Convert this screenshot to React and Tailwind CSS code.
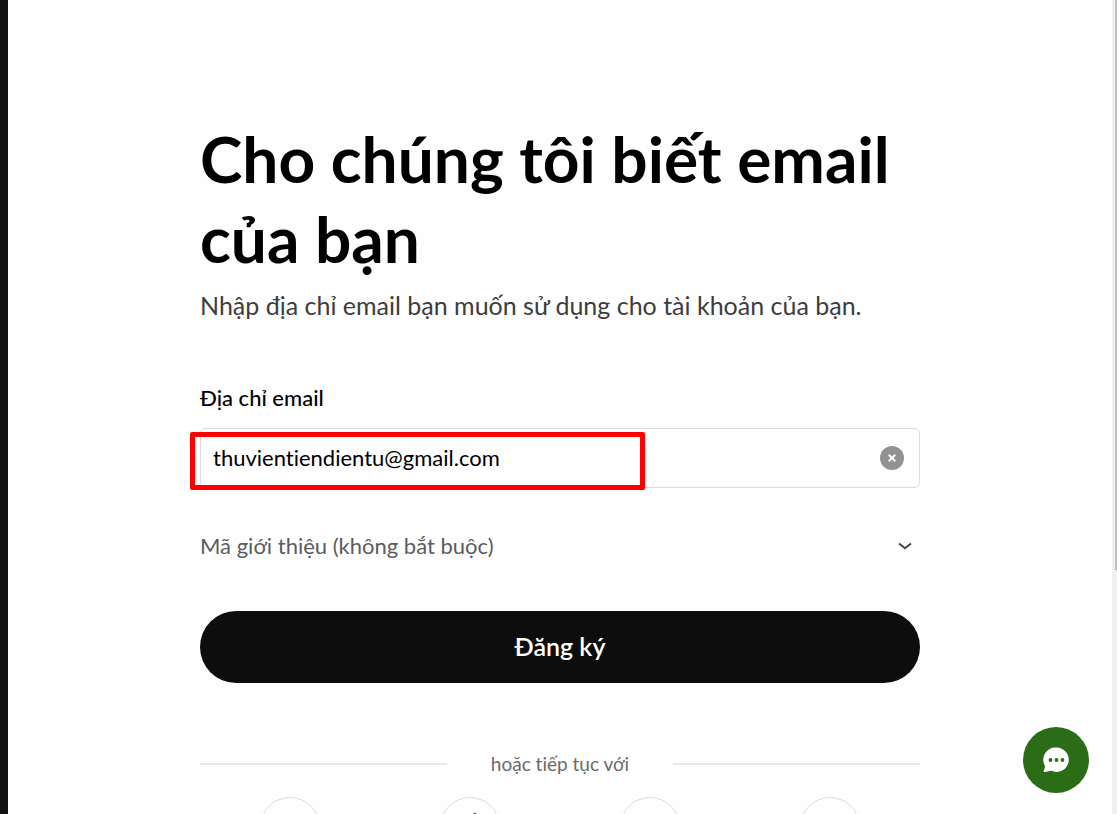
import React, { useState } from 'react'
import { FaApple, FaTelegramPlane, FaWallet } from 'react-icons/fa'
import { FcGoogle } from 'react-icons/fc'

const socials = [
  { name: 'Google', icon: <FcGoogle size={24} /> },
  { name: 'Apple', icon: <FaApple size={32} /> },
  { name: 'Telegram', icon: <FaTelegramPlane size={24} /> },
  { name: 'Wallet', icon: <FaWallet size={24} /> },
]

function ChatButton() {
  return (
    <button type="button" aria-label="Chat" className="absolute bottom-[21px] right-7 flex size-[66px] items-center justify-center rounded-full bg-[#2b6d17]">
      <svg width="26" height="26" viewBox="0 0 26 26">
        <path d="M13.5 0.5a12.2 12.2 0 1 1-5 23.3c-1.5-.3-3.5 1.2-7 1.2-.8 0-1.2-.5-.9-1.200.9-1.9 1.7-3.7 1.2-5.3A12.2 12.2 0 0 1 13.5.5Z" fill="#fff" />
        <circle cx="7.5" cy="13" r="1.9" fill="#2b6d17" />
        <circle cx="13.5" cy="13" r="1.9" fill="#2b6d17" />
        <circle cx="19.5" cy="13" r="1.9" fill="#2b6d17" />
      </svg>
    </button>
  )
}

function App() {
  const [email, setEmail] = useState('thuvientiendientu@gmail.com')

  return (
    <div className="relative flex h-screen overflow-hidden bg-[#fefefe] font-['Lato','Noto_Sans',sans-serif] text-black [font-variant-ligatures:no-common-ligatures]">
      <div className="w-2 shrink-0 bg-[#121212]"></div>

      <main className="flex-1 overflow-hidden px-6 pt-[119px]">
        <form className="mx-auto max-w-[720px]" onSubmit={(e) => e.preventDefault()}>
          <h1 className="text-[64px] leading-[80px] font-bold">Cho chúng tôi biết email của bạn</h1>
          <p className="mt-[6px] text-[25px] leading-10 text-[#3d3d3d]">Nhập địa chỉ email bạn muốn sử dụng cho tài khoản của bạn.</p>

          <label htmlFor="email" className="mt-[57px] block text-[22px] leading-8 font-medium">Địa chỉ email</label>
          <div className="relative mt-[14px] flex h-[60px] items-center rounded-md border border-[#dbdbdb] pr-[15px] pl-3">
            <input
              type="email"
              id="email"
              value={email}
              onChange={(e) => setEmail(e.target.value)}
              className="min-w-0 flex-1 bg-transparent text-[22px] leading-8 outline-none"
            />
            <button type="button" aria-label="Clear" onClick={() => setEmail('')} className="flex size-6 items-center justify-center rounded-full bg-[#929292]">
              <svg width="8" height="8" viewBox="0 0 8 8" stroke="#fff" strokeWidth="2">
                <path d="M0.7 0.7 7.3 7.3M7.3 0.7 0.7 7.3" />
              </svg>
            </button>
            {/* highlight around the typed address */}
            <div className="pointer-events-none absolute top-[3px] -left-[11px] h-[58px] w-[455px] rounded-xs border-5 border-[#ff0000]"></div>
          </div>

          <button type="button" className="mt-[42px] flex w-full items-center justify-between pr-2 text-[22px] leading-8 text-[#5c5c5c]">
            Mã giới thiệu (không bắt buộc)
            <svg width="14" height="8" viewBox="0 0 14 8" fill="none" stroke="#444" strokeWidth="2">
              <path d="M1 1.5 7 6.3 13 1.5" />
            </svg>
          </button>

          <button type="submit" className="mt-[49px] h-[72px] w-full rounded-full bg-[#0d0d0d] text-[25px] font-semibold text-white">Đăng ký</button>

          <div className="mt-[65px] flex items-center">
            <div className="h-[2px] flex-1 bg-[#e5e9ef]"></div>
            <span className="w-[226px] text-center text-[19px] leading-8 text-[#6b6b6b]">hoặc tiếp tục với</span>
            <div className="h-[2px] flex-1 bg-[#e5e9ef]"></div>
          </div>

          <div className="mt-[17px] grid grid-cols-4 justify-items-center">
            {socials.map((s) => (
              <button key={s.name} type="button" aria-label={s.name} className="flex size-[60px] items-center justify-center rounded-full border border-[#dbdbdb]">
                {s.icon}
              </button>
            ))}
          </div>
        </form>
      </main>

      {/* scrollbar */}
      <div className="flex w-[5px] shrink-0 justify-end bg-[#f0f0f0]">
        <div className="h-[70%] w-[2px] bg-[#c0c0c0]"></div>
      </div>

      <ChatButton />
    </div>
  )
}

export default App
